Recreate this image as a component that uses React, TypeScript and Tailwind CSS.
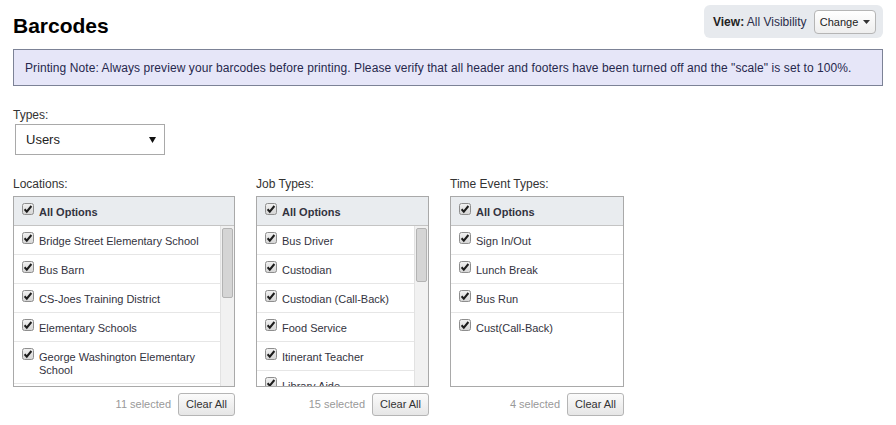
import React from 'react';

const locations = [
  'Bridge Street Elementary School',
  'Bus Barn',
  'CS-Joes Training District',
  'Elementary Schools',
  'George Washington Elementary School',
  'High School',
  'Jefferson Middle School',
  'Lincoln Elementary School',
  'Maintenance Building',
  'Main Office',
  'Transportation Center',
];

const jobTypes = [
  'Bus Driver',
  'Custodian',
  'Custodian (Call-Back)',
  'Food Service',
  'Itinerant Teacher',
  'Library Aide',
  'Maintenance',
  'Nurse',
  'Office Staff',
  'Paraprofessional',
  'Principal',
  'Secretary',
  'Substitute',
  'Teacher',
  'Technology',
];

const timeEvents = ['Sign In/Out', 'Lunch Break', 'Bus Run', 'Cust(Call-Back)'];

const CheckBox = () => (
  <svg width="12" height="12" viewBox="0 0 12 12" className="shrink-0">
    <defs>
      <linearGradient id="cbg" x1="0" y1="0" x2="0" y2="1">
        <stop offset="0" stopColor="#f2f2f2" />
        <stop offset="1" stopColor="#d4d4d4" />
      </linearGradient>
    </defs>
    <rect x="0.5" y="0.5" width="11" height="11" rx="2" fill="url(#cbg)" stroke="#8e8e8e" />
    <path d="M2.6 6.2 L4.8 8.6 L9.4 3" fill="none" stroke="#1c1c1c" strokeWidth="2" />
  </svg>
);

const OptionRow = ({ label, last }: { label: string; last?: boolean }) => (
  <div className={`flex items-start pl-[8px] pr-[10px] pt-[6px] pb-[6px] ${last ? '' : 'border-b border-[#e6e6e6]'}`}>
    <CheckBox />
    <span className="ml-[5px] mt-[3px] text-[11px] leading-[13px] text-[#333340]">{label}</span>
  </div>
);

const OptionPanel = ({
  title,
  items,
  width,
  thumb,
  selected,
}: {
  title: string;
  items: string[];
  width: string;
  thumb?: string;
  selected: number;
}) => (
  <div className={width}>
    <div className="text-[12px] leading-[14px] text-[#333]">{title}</div>
    <div className="mt-[5px] h-[191px] border border-[#a9a9a9] flex flex-col bg-white">
      <div className="flex items-start pl-[8px] pt-[6px] pb-[6px] bg-[#e9ecef] border-b border-[#c4c4c4]">
        <CheckBox />
        <span className="ml-[5px] mt-[3px] text-[11px] leading-[13px] font-bold text-[#333340]">All Options</span>
      </div>
      <div className="flex flex-1 min-h-0">
        <div className="flex-1 overflow-hidden">
          {items.map((it, i) => (
            <OptionRow key={it} label={it} last={!thumb && i === items.length - 1} />
          ))}
        </div>
        {thumb && (
          <div className="w-[14px] bg-[#f1f1f1] border-l border-[#e2e2e2] pt-[2px] px-[1px]">
            <div className={`${thumb} rounded-[2px] bg-[#d5d5d5] border border-[#b3b3b3]`} />
          </div>
        )}
      </div>
    </div>
    <div className="flex justify-end items-center gap-[7px] mt-[6px]">
      <span className="text-[11px] text-[#999]">{selected} selected</span>
      <button className="h-[23px] px-[7px] text-[11px] text-[#333] rounded-[3px] border border-[#b5b5b5] bg-gradient-to-b from-[#fbfbfb] to-[#e6e6e6]">
        Clear All
      </button>
    </div>
  </div>
);

export default function App() {
  return (
    <div className="w-[896px] h-[425px] bg-white px-[13px] font-['Liberation_Sans',Arial,sans-serif]">
      <div className="flex justify-between items-start">
        <h1 className="mt-[14px] text-[21px] leading-[24px] font-bold text-black">Barcodes</h1>
        <div className="mt-[5px] h-[33px] w-[179px] rounded-[6px] bg-[#e7eaee] flex items-start pl-[9px] pr-[7px]">
          <span className="mt-[10px] text-[12px] leading-[14px] text-[#2b2d4a] whitespace-nowrap">
            <b className="text-[#222]">View:</b> All Visibility
          </span>
          <button className="ml-auto mt-[5px] h-[24px] w-[62px] flex items-center justify-center gap-[5px] rounded-[4px] border border-[#b5b5b5] bg-gradient-to-b from-white to-[#eeeeee] text-[11px] text-[#222]">
            Change
            <svg width="7" height="4" viewBox="0 0 7 4">
              <path d="M0 0 L7 0 L3.5 4 Z" fill="#333" />
            </svg>
          </button>
        </div>
      </div>

      <div className="mt-[11px] h-[37px] flex items-center px-[11px] bg-[#e6e6f8] border border-[#7c8296] text-[12px] tracking-[0.08px] text-[#26284d] whitespace-nowrap">
        Printing Note: Always preview your barcodes before printing. Please verify that all header and footers have been turned off and the "scale" is set to 100%.
      </div>

      <div className="mt-[22px] text-[12px] leading-[14px] text-[#333]">Types:</div>
      <div className="mt-[2px] ml-[2px] w-[150px] h-[31px] border border-[#a9a9a9] flex items-center justify-between pl-[10px] pr-[8px] text-[13px] text-[#222]">
        <span>Users</span>
        <svg width="7" height="6" viewBox="0 0 7 6">
          <path d="M0 0 L7 0 L3.5 6 Z" fill="#111" />
        </svg>
      </div>

      <div className="mt-[22px] flex gap-[21px]">
        <OptionPanel title="Locations:" items={locations} width="w-[222px]" thumb="h-[70px]" selected={11} />
        <OptionPanel title="Job Types:" items={jobTypes} width="w-[173px]" thumb="h-[54px]" selected={15} />
        <OptionPanel title="Time Event Types:" items={timeEvents} width="w-[174px]" selected={4} />
      </div>
    </div>
  );
}
